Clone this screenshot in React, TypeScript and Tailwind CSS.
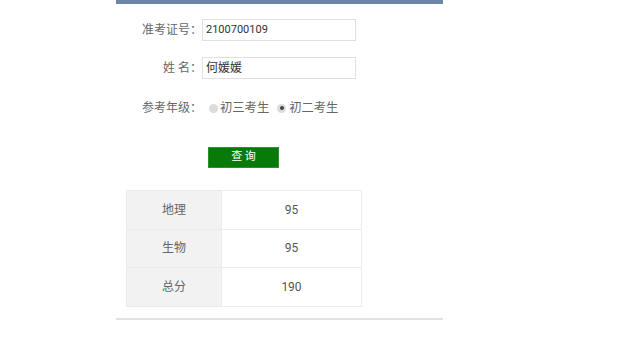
import React from 'react';

const rows = [
    { subject: '地理', score: '95' },
    { subject: '生物', score: '95' },
    { subject: '总分', score: '190' },
];

const font = 'font-["Roboto","Noto_Sans_CJK_SC",sans-serif]';

export default function App() {
    return (
        <div className={`w-[624px] h-[344px] bg-white ${font}`}>
            <div className="ml-[116px] w-[327px]">
                <div className="h-[4px] bg-[#6c85a8]" />

                {/* 查询表单 */}
                <div className="pt-[15px]">
                    <div className="flex items-center h-[22px]">
                        <label className="w-[86px] text-right text-[12px] text-[#666]">准考证号：</label>
                        <div className="w-[154px] h-[22px] border border-[#e0e0e0] flex items-center pl-[3px] text-[11px] text-[#333]">
                            2100700109
                        </div>
                    </div>
                    <div className="flex items-center h-[22px] mt-[16px]">
                        <label className="w-[86px] text-right text-[12px] text-[#666]">姓 名：</label>
                        <div className="w-[154px] h-[22px] border border-[#e0e0e0] flex items-center pl-[3px] text-[12px] text-[#333]">
                            何媛媛
                        </div>
                    </div>
                    <div className="flex items-center h-[22px] mt-[18px] text-[12px] text-[#666]">
                        <label className="w-[86px] text-right">参考年级：</label>
                        <span className="ml-[7px] w-[9px] h-[9px] rounded-full bg-[#dcdcdc]" />
                        <span className="ml-[2px] text-[12.3px]">初三考生</span>
                        <span className="ml-[8px] w-[9px] h-[9px] rounded-full bg-[#dcdcdc] flex items-center justify-center">
                            <span className="w-[4px] h-[4px] rounded-full bg-[#444]" />
                        </span>
                        <span className="ml-[3px] text-[12.3px]">初二考生</span>
                    </div>
                    <div className="flex mt-[28px]">
                        <button className="ml-[92px] w-[71px] h-[21px] bg-[#087a08] text-white text-[11px] border border-[#2d8f2d]">
                            查 询
                        </button>
                    </div>
                </div>

                {/* 成绩 */}
                <table className="ml-[10px] mt-[22px] w-[236px] border-collapse text-[12px] text-[#666]">
                    <tbody>
                        {rows.map((r) => (
                            <tr key={r.subject} className="h-[38.5px]">
                                <td className="w-[95px] bg-[#f2f2f2] border border-[#ececec] text-center">{r.subject}</td>
                                <td className="border border-[#ececec] text-center text-[#555]">{r.score}</td>
                            </tr>
                        ))}
                    </tbody>
                </table>

                <div className="mt-[11px] h-[2px] bg-[#e2e2e2]" />
            </div>
        </div>
    );
}
